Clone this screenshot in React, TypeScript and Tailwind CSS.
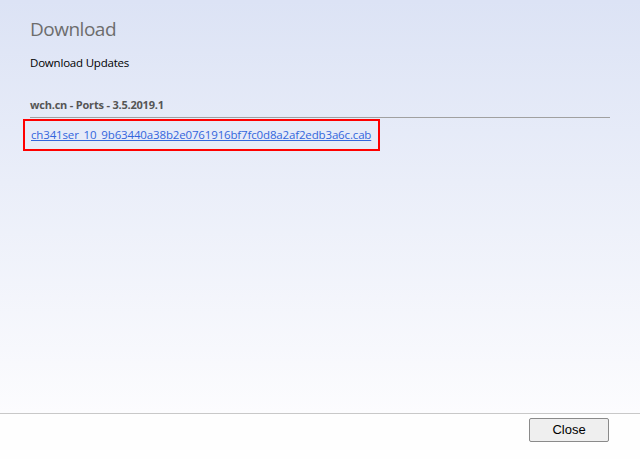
import React from 'react';

const App: React.FC = () => {
  return (
    <div className="w-[640px] h-[459px] flex flex-col overflow-hidden" style={{ fontFamily: '"Open Sans", "Noto Sans", sans-serif' }}>
      {/* Main content */}
      <div className="flex-1 bg-gradient-to-b from-[#dce3f5] to-[#fcfcfe] px-[30px] pt-[15px]">
        <h1 className="text-[19px] leading-[28px] tracking-[-0.5px] text-[#6d6d6d] font-normal">Download</h1>
        <p className="mt-[12px] text-[11.5px] leading-[16px] tracking-[-0.2px] text-black">Download Updates</p>
        <div className="mt-[20px] border-b border-[#a0a0a0] pb-[2px]">
          <span className="text-[11px] leading-[16px] tracking-[-0.2px] font-bold text-[#555555]">wch.cn - Ports - 3.5.2019.1</span>
        </div>
        <div className="-ml-[7px] mt-[1px] w-[357px] h-[32px] border-2 border-[#ff0000] flex items-center pl-[6px]">
          <a href="#" className="text-[11.5px] leading-[16px] tracking-[-0.15px] text-[#3366dd] underline">
            ch341ser_10_9b63440a38b2e0761916bf7fc0d8a2af2edb3a6c.cab
          </a>
        </div>
      </div>
      {/* Footer */}
      <div className="h-[46px] border-t border-[#c8c8c8] bg-[#fefefe] flex justify-end items-start pt-[4px] pr-[31px]">
        <button className="w-[80px] h-[24px] bg-[#efefef] border border-[#8a8a8a] rounded-[2px] text-[13px] text-black" style={{ fontFamily: '"Liberation Sans", Arial, sans-serif' }}>
          Close
        </button>
      </div>
    </div>
  );
};

export default App;
